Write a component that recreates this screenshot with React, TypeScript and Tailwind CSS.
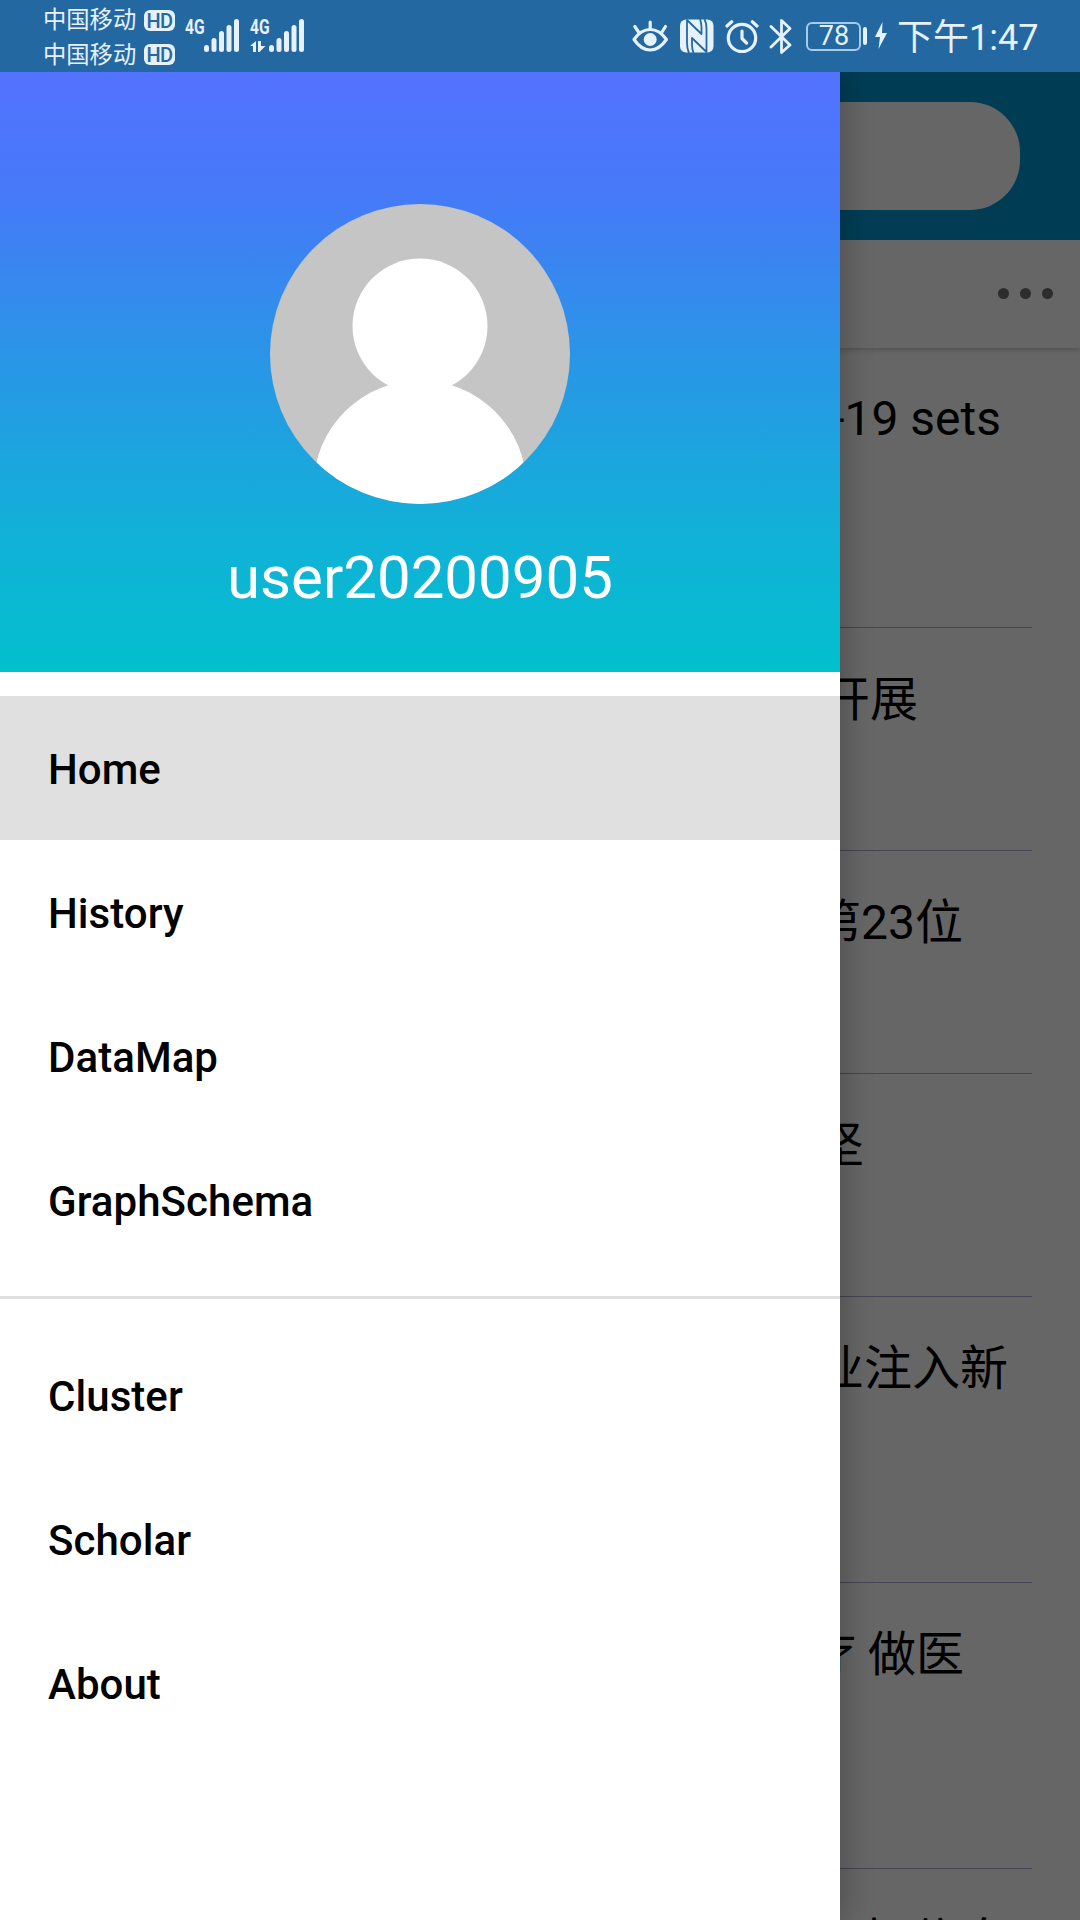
import React from "react";

const INK = "#e6f1fb";

function Signal() {
  return (
    <svg width="36" height="34" viewBox="0 0 36 34" fill={INK}>
      <rect x="0" y="26" width="5" height="7" rx="2.5" />
      <rect x="7.5" y="19" width="5" height="14" rx="2.5" />
      <rect x="15" y="12" width="5" height="21" rx="2.5" />
      <rect x="22.5" y="6" width="5" height="27" rx="2.5" />
      <rect x="30" y="0" width="5" height="33" rx="2.5" />
    </svg>
  );
}

function Carrier() {
  return (
    <div className="flex h-[35px] items-center gap-[7px]">
      <span className="w-[94px] whitespace-nowrap text-[23.3px] leading-[34px]">中国移动</span>
      <span className="flex h-[21px] w-[31px] items-center justify-center rounded-[6px] bg-[#e6f1fb] pt-px text-[20px] font-medium leading-none tracking-[-0.5px] text-[#2468a2]">
        HD
      </span>
    </div>
  );
}

function Eye() {
  return (
    <svg width="38" height="34" viewBox="0 0 38 34" fill="none" stroke={INK} strokeWidth="3.2" strokeLinecap="round" strokeLinejoin="round">
      <path d="M2 20.500C6.500 14 12 10.500 18.200 10.500s11.700 3.500 16.200 10C29.900 27 24.400 31 18.200 31S6.500 27 2 20.500z" />
      <circle cx="18.200" cy="20.500" r="6.500" fill={INK} stroke="none" />
      <path d="M18.200 3v7M2.800 7.500l3.700 5.500M33.500 7.500L30 13" />
    </svg>
  );
}

function Nfc() {
  return (
    <svg width="34" height="34" viewBox="0 0 34 34">
      <rect x="0" y="0.500" width="33.500" height="33" rx="6" fill={INK} />
      <g fill="none" stroke="#2468a2" strokeWidth="1.800" strokeLinejoin="round">
        <path d="M9 34C7.500 31 7 28 7 24V1L21.500 15V8c0-3-.5-5-1.500-8" />
        <path d="M24.500 0c1.500 3 2 6 2 10v23L12 19v7c0 3 .5 5 1.500 8" />
      </g>
    </svg>
  );
}

function Alarm() {
  return (
    <svg width="34" height="34" viewBox="0 0 34 34" fill="none" stroke={INK} strokeWidth="3.2" strokeLinecap="round" strokeLinejoin="round">
      <circle cx="17" cy="19" r="13.700" />
      <path d="M17 12v7.500l4.500 4.500M2 7L6.700 2.800M32 7L27.300 2.800" />
    </svg>
  );
}

function Bluetooth() {
  return (
    <svg width="24" height="36" viewBox="0 0 24 36" fill="none" stroke={INK} strokeWidth="2.800" strokeLinecap="round" strokeLinejoin="round">
      <path d="M2 8.500L21 27l-8.500 7.500V2.500L21 10.500 2 29" />
    </svg>
  );
}

function StatusBar() {
  return (
    <header className="flex h-[72px] shrink-0 justify-between bg-[#2468a2] pl-[43px] pr-[42px] text-[#e6f1fb]">
      <div className="flex">
        <div className="flex flex-col pt-[3px]">
          <Carrier />
          <Carrier />
        </div>
        <div className="flex pl-[10px] pt-[19px]">
          <span className="w-[19px] origin-left scale-x-[0.78] pt-px text-[20px] font-bold leading-[15px]">4G</span>
          <Signal />
        </div>
        <div className="flex pl-[10px] pt-[19px]">
          <div className="flex w-[19px] flex-col">
            <span className="origin-left scale-x-[0.78] pt-px text-[20px] font-bold leading-[15px]">4G</span>
            <svg className="mt-[6px]" width="17" height="12" viewBox="0 0 17 12" fill={INK}>
              <path d="M0 5L6 0v11H3V5zM8 0h3v5h4.500L9.500 11H8z" />
            </svg>
          </div>
          <Signal />
        </div>
      </div>
      <div className="flex items-center">
        <Eye />
        <div className="w-[10px]" />
        <Nfc />
        <div className="w-[11px]" />
        <Alarm />
        <div className="w-[10px]" />
        <Bluetooth />
        <div className="w-[13px]" />
        <div className="flex h-[29px] w-[55px] items-center justify-center rounded-[6px] border-2 border-[#a9cbea] pl-px pt-px text-[27px] leading-none">
          78
        </div>
        <div className="ml-[2px] h-[18px] w-[4px] rounded-full bg-[#e6f1fb]" />
        <svg className="ml-[7px]" width="14" height="28" viewBox="0 0 14 28" fill={INK}>
          <path d="M8.500 0L1 15h5l-1.500 12L13 11H8z" />
        </svg>
        <span className="ml-[9px] w-[141px] whitespace-nowrap pt-[4px] text-[36px] leading-[72px]">下午1:47</span>
      </div>
    </header>
  );
}

function Avatar() {
  return (
    <svg width="300" height="300" viewBox="0 0 300 300">
      <defs>
        <clipPath id="avatar">
          <circle cx="150" cy="150" r="150" />
        </clipPath>
      </defs>
      <g clipPath="url(#avatar)">
        <rect width="300" height="300" fill="#c5c5c5" />
        <circle cx="150" cy="122" r="67.500" fill="#fff" />
        <circle cx="150" cy="283" r="106.500" fill="#fff" />
      </g>
    </svg>
  );
}

function MenuItem({ label, active = false }: { label: string; active?: boolean }) {
  return (
    <li className={active ? "flex h-[144px] items-center bg-[#e0e0e0] pl-12 pt-1" : "flex h-[144px] items-center pl-12 pt-1"}>
      <span className="text-[42px] font-medium leading-none tracking-[0.05px] text-black">{label}</span>
    </li>
  );
}

function Drawer() {
  return (
    <nav className="relative z-10 flex w-[840px] shrink-0 flex-col bg-white shadow-[0_0_30px_rgba(0,0,0,0.3)]">
      <div className="flex h-[600px] shrink-0 flex-col items-center bg-[linear-gradient(180deg,#5272ff_0%,#4679f8_20%,#2c93e8_45%,#12b0d8_76%,#02c0cc_100%)] pt-[132px]">
        <Avatar />
        <div className="mt-[39px] text-[60px] leading-[70px] text-white">user20200905</div>
      </div>
      <ul className="pt-6">
        <MenuItem label="Home" active />
        <MenuItem label="History" />
        <MenuItem label="DataMap" />
        <MenuItem label="GraphSchema" />
      </ul>
      <div className="mt-6 h-[3px] shrink-0 bg-[#e0e0e0]" />
      <ul className="pt-6">
        <MenuItem label="Cluster" />
        <MenuItem label="Scholar" />
        <MenuItem label="About" />
      </ul>
    </nav>
  );
}

function Row({ className, children }: { className: string; children: React.ReactNode }) {
  return (
    <article className={`mr-12 flex shrink-0 justify-end overflow-hidden border-b border-[#444452] ${className}`}>
      <h2 className="whitespace-pre text-[48px] leading-[70px] text-black">{children}</h2>
    </article>
  );
}

function Feed() {
  return (
    <main className="-ml-[60px] flex w-[300px] shrink-0 flex-col overflow-hidden bg-[#666666]">
      <div className="relative z-[1] flex h-[168px] shrink-0 items-center bg-[#003d55] pr-[60px]">
        <div className="h-[108px] flex-1 rounded-r-[50px] bg-[#666666]" />
      </div>
      <div className="relative flex h-[108px] shrink-0 items-center justify-end gap-[11px] pb-px pr-[27px] shadow-[0_1px_6px_rgba(0,0,0,0.25)]">
        <span className="size-[11px] rounded-full bg-[#2d2d2d]" />
        <span className="size-[11px] rounded-full bg-[#2d2d2d]" />
        <span className="size-[11px] rounded-full bg-[#2d2d2d]" />
      </div>
      <Row className="h-[280px] pr-[31px] pt-[36px]">-19 sets</Row>
      <Row className="h-[223px] pr-[114px] pt-[37px]">开展</Row>
      <Row className="h-[223px] pr-[69px] pt-[37px]">第23位</Row>
      <Row className="h-[223px] pr-[168px] pt-[37px]">坚</Row>
      <Row className="h-[286px] pr-[24px] pt-[37px]">业注入新</Row>
      <Row className="h-[286px] pr-[68px] pt-[37px]">疗 做医</Row>
      <Row className="h-[286px] pr-[24px] pt-[38px]">把信息</Row>
    </main>
  );
}

export default function App() {
  return (
    <div className="flex h-[1920px] w-[1080px] flex-col overflow-hidden font-[Roboto,'Noto_Sans_CJK_SC',sans-serif]">
      <StatusBar />
      <div className="flex h-[1848px] overflow-hidden">
        <Drawer />
        <Feed />
      </div>
    </div>
  );
}
